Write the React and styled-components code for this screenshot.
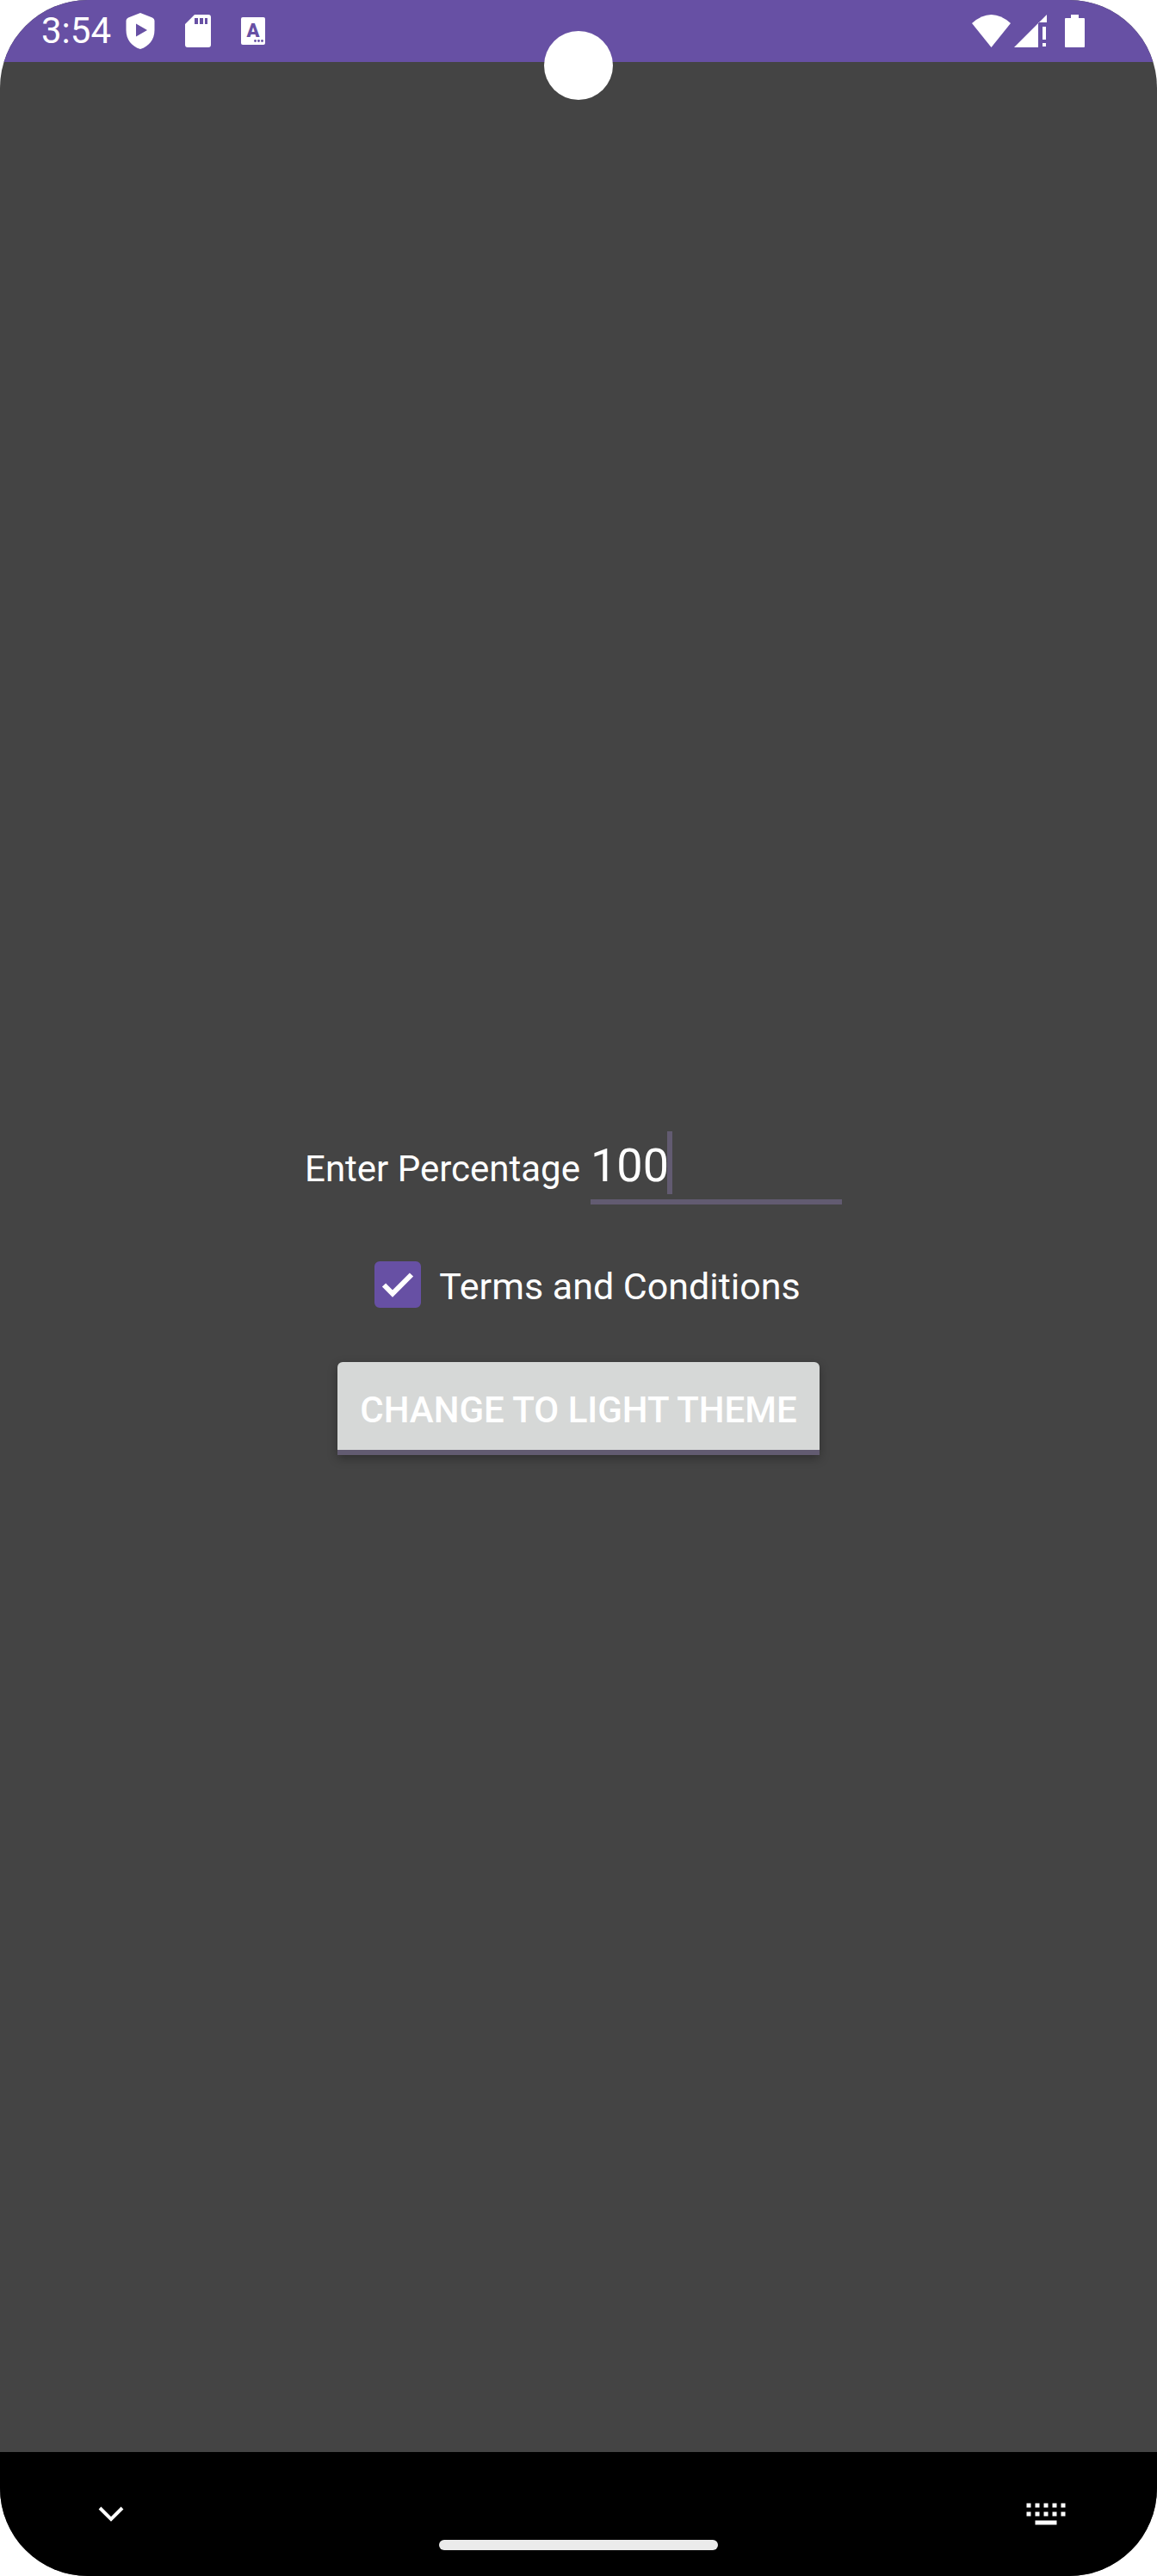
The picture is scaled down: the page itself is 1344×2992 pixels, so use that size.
import React, { useState } from "react";
import styled, { createGlobalStyle } from "styled-components";

const colors = {
  primary: "#6750a4",
  surface: "#444444",
  accent: "#625b71",
  button: "#d6d8d7",
};

const GlobalStyle = createGlobalStyle`
  *, *::before, *::after { box-sizing: border-box; }
  body { margin: 0; background: #fff; font-family: Roboto, sans-serif; }
`;

const Screen = styled.div`
  position: relative;
  display: flex;
  flex-direction: column;
  min-height: 100vh;
  overflow: hidden;
  border-radius: 102px;
  background: ${colors.surface};
  color: #fff;
`;

const StatusBar = styled.header`
  display: flex;
  align-items: center;
  justify-content: space-between;
  height: 72px;
  padding: 0 84px 0 48px;
  background: ${colors.primary};
`;

const StatusGroup = styled.div`
  display: flex;
  align-items: center;
  gap: ${(p) => p.$gap}px;
`;

const Clock = styled.time`
  font-size: 42px;
  line-height: 48px;
`;

const Camera = styled.div`
  position: absolute;
  top: 36px;
  left: 50%;
  width: 80px;
  height: 80px;
  border-radius: 50%;
  background: #fff;
  transform: translateX(-50%);
`;

const Icon = styled.svg`
  display: block;
  flex: none;
  fill: #fff;
`;

const Main = styled.main`
  flex: 1;
  display: flex;
  flex-direction: column;
  align-items: center;
  justify-content: center;
  padding-top: 84px;
`;

const FieldRow = styled.div`
  display: flex;
  align-items: baseline;
  gap: 12px;
  padding-right: 12px;
`;

const FieldLabel = styled.label`
  font-size: 42px;
  line-height: 48px;
`;

const Field = styled.div`
  display: flex;
  align-items: last baseline;
  width: 292px;
  padding-bottom: 6px;
  border-bottom: 6px solid ${colors.accent};
`;

const FieldInput = styled.input`
  width: 91px;
  height: 67px;
  margin-top: 6px;
  padding: 0;
  border: 0;
  outline: 0;
  background: none;
  color: inherit;
  font: 54px / 67px Roboto, sans-serif;
`;

const Caret = styled.span`
  width: 6px;
  height: 73px;
  margin-left: -2px;
  align-self: flex-end;
  background: ${colors.accent};
`;

const CheckRow = styled.label`
  display: flex;
  align-items: flex-start;
  gap: 21px;
  margin: 66px 0 59px;
  padding-left: 21px;
  font-size: 43px;
  line-height: 58px;
`;

const CheckBox = styled.span`
  display: grid;
  width: 54px;
  height: 54px;

  > * { grid-area: 1 / 1; }
`;

const CheckInput = styled.input`
  width: 54px;
  height: 54px;
  margin: 0;
  appearance: none;
  border: 6px solid ${colors.primary};
  border-radius: 6px;

  &:checked { background: ${colors.primary}; }
  &:not(:checked) + svg { visibility: hidden; }
`;

const CheckMark = styled(Icon)`
  pointer-events: none;
`;

const ThemeButton = styled.button`
  height: 108px;
  padding: 9px 26px 0;
  border: 0;
  border-bottom: 6px solid ${colors.accent};
  border-radius: 6px 6px 0 0;
  background: ${colors.button};
  box-shadow: 0 4px 12px rgba(0, 0, 0, 0.3);
  color: #fff;
  font: 500 42px / 48px Roboto, sans-serif;
  text-transform: uppercase;
`;

const NavBar = styled.nav`
  display: grid;
  grid-template-columns: 1fr auto 1fr;
  align-items: center;
  height: 144px;
  padding: 0 106px;
  background: #000;
`;

const NavButton = styled.button`
  display: grid;
  place-items: center;
  justify-self: ${(p) => p.$side};
  width: 46px;
  height: 46px;
  padding: 0;
  border: 0;
  background: none;
`;

const HomeHandle = styled.div`
  align-self: end;
  width: 324px;
  height: 12px;
  margin-bottom: 30px;
  border-radius: 6px;
  background: #ebebeb;
`;

function ShieldIcon() {
  return (
    <Icon width="34" height="42" viewBox="0 0 34 42" aria-hidden="true">
      <path
        fillRule="evenodd"
        d="M17 0L31 5.4Q33.500 6.400 33.500 9V20C33.500 31 27 39 17 42C7 39 .5 31 .5 20V9Q.5 6.400 3 5.400ZM12 12.500V27.500L25 20Z"
      />
    </Icon>
  );
}

function SdCardIcon() {
  return (
    <Icon width="30" height="38" viewBox="0 0 30 38" aria-hidden="true">
      <path
        fillRule="evenodd"
        d="M11 0H27Q30 0 30 3V35Q30 38 27 38H3Q0 38 0 35V11ZM11 4V11H15V4ZM17 4V11H21V4ZM23 4V11H26V4Z"
      />
    </Icon>
  );
}

const KeyLetter = styled.text`
  fill: ${colors.primary};
  font: 900 22px Roboto, sans-serif;
  text-anchor: middle;
`;

function LetterIcon() {
  return (
    <Icon width="28" height="32" viewBox="0 0 28 32" aria-hidden="true">
      <rect width="28" height="32" rx="2" />
      <KeyLetter x="14" y="23">A</KeyLetter>
      {[16.5, 20.5, 24.5].map((x) => (
        <circle key={x} cx={x} cy="27.500" r="1.400" fill={colors.primary} />
      ))}
    </Icon>
  );
}

function WifiIcon() {
  return (
    <Icon width="45" height="38" viewBox="0 0 45 38" aria-hidden="true">
      <path d="M0 10Q22.500 -10 45 10L22.500 38Z" />
    </Icon>
  );
}

function SignalIcon() {
  return (
    <Icon width="38" height="38" viewBox="0 0 38 38" aria-hidden="true">
      <path d="M0 38L38 0V9H28V38ZM33 14H37V29H33ZM33 33H37V37H33Z" />
    </Icon>
  );
}

function BatteryIcon() {
  return (
    <Icon width="23" height="38" viewBox="0 0 23 38" aria-hidden="true">
      <path d="M7 0H16V4H22Q23 4 23 5V37Q23 38 22 38H1Q0 38 0 37V5Q0 4 1 4H7Z" />
    </Icon>
  );
}

function ChevronIcon() {
  return (
    <Icon width="30" height="18" viewBox="0 0 30 18" aria-hidden="true">
      <path d="M2 2L15 15L28 2" fill="none" stroke="#fff" strokeWidth="4" />
    </Icon>
  );
}

function KeyboardIcon() {
  const keys = [0, 1, 2, 3, 4].flatMap((c) => [0, 1].map((r) => [c, r]));
  return (
    <Icon width="46" height="26" viewBox="0 0 46 26" aria-hidden="true">
      {keys.map(([c, r]) => (
        <rect key={`${c}-${r}`} x={c * 10 + 0.5} y={r * 10 + 0.5} width="5" height="5" />
      ))}
      <rect x="10.500" y="20.500" width="25" height="5" />
    </Icon>
  );
}

export default function App() {
  const [percentage, setPercentage] = useState("100");
  const [accepted, setAccepted] = useState(true);

  return (
    <>
      <GlobalStyle />
      <Screen>
        <StatusBar>
          <StatusGroup $gap={17}>
            <Clock>3:54</Clock>
            <StatusGroup $gap={35}>
              <ShieldIcon />
              <SdCardIcon />
              <LetterIcon />
            </StatusGroup>
          </StatusGroup>
          <StatusGroup $gap={21}>
            <StatusGroup $gap={4}>
              <WifiIcon />
              <SignalIcon />
            </StatusGroup>
            <BatteryIcon />
          </StatusGroup>
        </StatusBar>
        <Camera />

        <Main>
          <FieldRow>
            <FieldLabel htmlFor="percentage">Enter Percentage</FieldLabel>
            <Field>
              <FieldInput
                id="percentage"
                inputMode="numeric"
                value={percentage}
                onChange={(e) => setPercentage(e.target.value)}
              />
              <Caret />
            </Field>
          </FieldRow>

          <CheckRow>
            <CheckBox>
              <CheckInput
                type="checkbox"
                checked={accepted}
                onChange={(e) => setAccepted(e.target.checked)}
              />
              <CheckMark width="54" height="54" viewBox="0 0 54 54" aria-hidden="true">
                <path d="M11 27.500L21 37.500L43 15.500" fill="none" stroke="#fff" strokeWidth="6" />
              </CheckMark>
            </CheckBox>
            Terms and Conditions
          </CheckRow>

          <ThemeButton type="button">Change to light theme</ThemeButton>
        </Main>

        <NavBar>
          <NavButton $side="start" type="button" aria-label="Hide keyboard">
            <ChevronIcon />
          </NavButton>
          <HomeHandle />
          <NavButton $side="end" type="button" aria-label="Switch keyboard">
            <KeyboardIcon />
          </NavButton>
        </NavBar>
      </Screen>
    </>
  );
}
